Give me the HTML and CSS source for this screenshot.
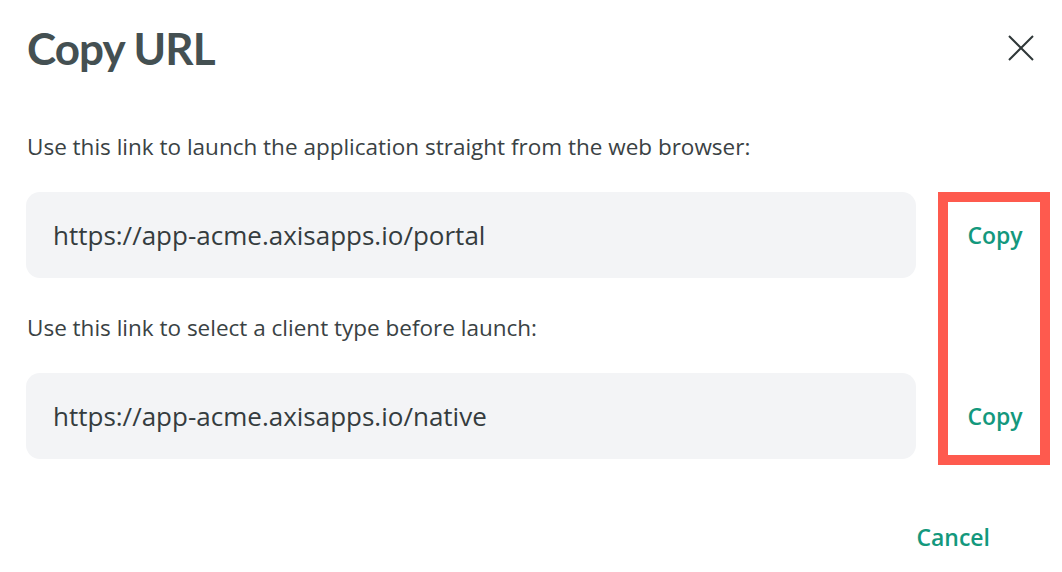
FILE: index.html
```html
<!DOCTYPE html>
<html>
<head>
<meta charset="utf-8">
<link rel="stylesheet" href="styles.css">
</head>
<body>
<div class="dialog">
  <div class="header">
    <h1 class="title">Copy URL</h1>
    <button class="close" aria-label="Close">
      <svg width="26" height="26" viewBox="0 0 26 26"><path d="M1 1L25 25M25 1L1 25" stroke="#2f3738" stroke-width="2" fill="none"/></svg>
    </button>
  </div>
  <div class="section">
    <p class="label">Use this link to launch the application straight from the web browser:</p>
    <div class="row">
      <div class="url">https://app-acme.axisapps.io/portal</div>
      <button class="copy">Copy</button>
    </div>
  </div>
  <div class="section second">
    <p class="label">Use this link to select a client type before launch:</p>
    <div class="row">
      <div class="url">https://app-acme.axisapps.io/native</div>
      <button class="copy">Copy</button>
    </div>
  </div>
  <div class="footer">
    <button class="cancel">Cancel</button>
  </div>
  <div class="highlight"></div>
</div>
</body>
</html>
```
FILE: styles.css
```css
html, body {
  margin: 0;
  padding: 0;
  background: #ffffff;
  width: 1062px;
  height: 572px;
  overflow: hidden;
}
body {
  font-family: "Open Sans", "Lato", sans-serif;
  color: #3a4244;
}
.dialog {
  position: relative;
  padding: 22px 0 0 27px;
  box-sizing: border-box;
  height: 572px;
}
.header {
  display: flex;
  justify-content: space-between;
  align-items: center;
  height: 52px;
}
.title {
  margin: 0;
  font-family: "Lato", sans-serif;
  font-size: 44px;
  line-height: 52px;
  font-weight: 700;
  color: #445052;
  letter-spacing: -0.9px;
}
.close {
  border: 0;
  background: none;
  padding: 0;
  margin-right: 28px;
  width: 26px;
  height: 26px;
  display: flex;
}
.section {
  margin-top: 58px;
}
.section.second {
  margin-top: 35px;
}
.label {
  margin: 0;
  font-size: 22.5px;
  line-height: 30px;
  color: #3a4244;
}
.row {
  display: flex;
  align-items: center;
  margin-top: 30px;
  margin-left: -1px;
}
.url {
  flex: 0 0 890px;
  height: 86px;
  box-sizing: border-box;
  background: #f3f4f6;
  border-radius: 14px;
  padding-left: 27px;
  display: flex;
  align-items: center;
  font-size: 26px;
  color: #353c3e;
}
.copy, .cancel {
  border: 0;
  background: none;
  padding: 0;
  font-family: "Open Sans", "Lato", sans-serif;
  font-weight: 600;
  font-size: 23px;
  color: #13987d;
}
.copy {
  flex: 0 0 146px;
  padding-left: 12px;
  box-sizing: border-box;
  text-align: center;
}
.footer {
  display: flex;
  justify-content: flex-end;
  padding-right: 72px;
  margin-top: 62px;
}
.highlight {
  position: absolute;
  left: 938px;
  top: 192px;
  width: 112px;
  height: 273px;
  box-sizing: border-box;
  border: 10px solid #fe5a4e;
}
```
